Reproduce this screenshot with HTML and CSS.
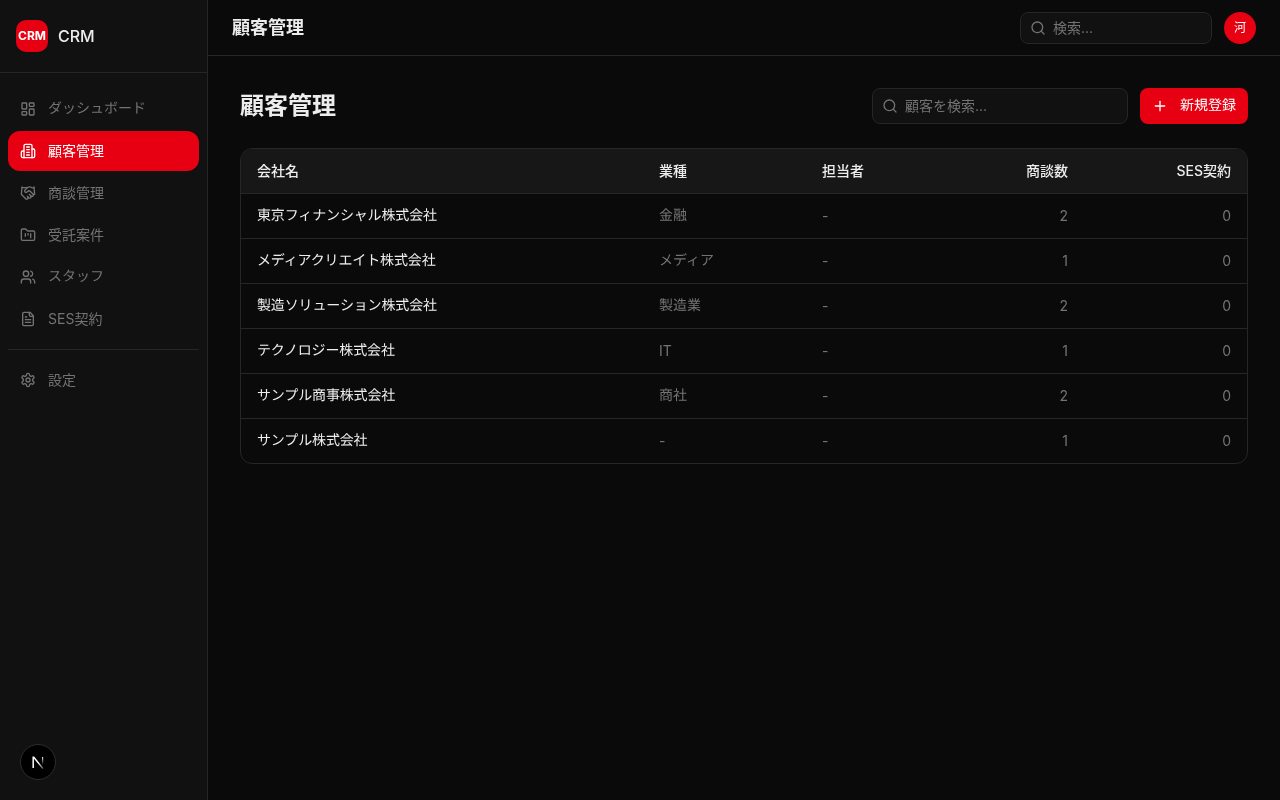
FILE: index.html
```html
<!DOCTYPE html>
<html lang="ja">
<head>
<meta charset="utf-8">
<title>顧客管理</title>
<link rel="stylesheet" href="styles.css">
</head>
<body>
<div class="app">
  <aside class="sidebar">
    <div class="brand">
      <div class="brand-logo">CRM</div>
      <span class="brand-name">CRM</span>
    </div>
    <nav class="nav">
      <a class="nav-item"><svg class="icon" viewBox="0 0 24 24"><rect x="3" y="3" width="7" height="9" rx="1"/><rect x="14" y="3" width="7" height="5" rx="1"/><rect x="14" y="12" width="7" height="9" rx="1"/><rect x="3" y="16" width="7" height="5" rx="1"/></svg><span class="geo">ダッシュボード</span></a>
      <a class="nav-item active"><svg class="icon" viewBox="0 0 24 24"><path d="M6 22V4a2 2 0 0 1 2-2h8a2 2 0 0 1 2 2v18Z"/><path d="M6 12H4a2 2 0 0 0-2 2v6a2 2 0 0 0 2 2h2"/><path d="M18 9h2a2 2 0 0 1 2 2v9a2 2 0 0 1-2 2h-2"/><path d="M10 6h4"/><path d="M10 10h4"/><path d="M10 14h4"/><path d="M10 18h4"/></svg><span>顧客管理</span></a>
      <a class="nav-item"><svg class="icon" viewBox="0 0 24 24"><path d="m11 17 2 2a1 1 0 1 0 3-3"/><path d="m14 14 2.5 2.5a1 1 0 1 0 3-3l-3.88-3.88a3 3 0 0 0-4.24 0l-.88.88a1 1 0 1 1-3-3l2.81-2.81a5.79 5.79 0 0 1 7.06-.87l.47.28a2 2 0 0 0 1.42.25L21 4"/><path d="m21 3 1 11h-2"/><path d="M3 3 2 14l6.5 6.5a1 1 0 1 0 3-3"/><path d="M3 4h8"/></svg><span>商談管理</span></a>
      <a class="nav-item"><svg class="icon" viewBox="0 0 24 24"><path d="M4 20h16a2 2 0 0 0 2-2V8a2 2 0 0 0-2-2h-7.93a2 2 0 0 1-1.66-.9l-.82-1.2A2 2 0 0 0 7.93 3H4a2 2 0 0 0-2 2v13c0 1.1.9 2 2 2Z"/><path d="M8 10v4"/><path d="M12 10v2"/><path d="M16 10v6"/></svg><span>受託案件</span></a>
      <a class="nav-item"><svg class="icon" viewBox="0 0 24 24"><path d="M16 21v-2a4 4 0 0 0-4-4H6a4 4 0 0 0-4 4v2"/><circle cx="9" cy="7" r="4"/><path d="M22 21v-2a4 4 0 0 0-3-3.87"/><path d="M16 3.13a4 4 0 0 1 0 7.75"/></svg><span class="geo">スタッフ</span></a>
      <a class="nav-item"><svg class="icon" viewBox="0 0 24 24"><path d="M15 2H6a2 2 0 0 0-2 2v16a2 2 0 0 0 2 2h12a2 2 0 0 0 2-2V7Z"/><path d="M14 2v4a2 2 0 0 0 2 2h4"/><path d="M10 9H8"/><path d="M16 13H8"/><path d="M16 17H8"/></svg><span>SES契約</span></a>
      <div class="nav-divider"></div>
      <a class="nav-item"><svg class="icon" viewBox="0 0 24 24"><path d="M12.22 2h-.44a2 2 0 0 0-2 2v.18a2 2 0 0 1-1 1.73l-.43.25a2 2 0 0 1-2 0l-.15-.08a2 2 0 0 0-2.73.73l-.22.38a2 2 0 0 0 .73 2.73l.15.1a2 2 0 0 1 1 1.72v.51a2 2 0 0 1-1 1.74l-.15.09a2 2 0 0 0-.73 2.73l.22.38a2 2 0 0 0 2.73.73l.15-.08a2 2 0 0 1 2 0l.43.25a2 2 0 0 1 1 1.73V20a2 2 0 0 0 2 2h.44a2 2 0 0 0 2-2v-.18a2 2 0 0 1 1-1.73l.43-.25a2 2 0 0 1 2 0l.15.08a2 2 0 0 0 2.73-.73l.22-.39a2 2 0 0 0-.73-2.73l-.15-.08a2 2 0 0 1-1-1.74v-.5a2 2 0 0 1 1-1.74l.15-.09a2 2 0 0 0 .73-2.73l-.22-.38a2 2 0 0 0-2.73-.73l-.15.08a2 2 0 0 1-2 0l-.43-.25a2 2 0 0 1-1-1.73V4a2 2 0 0 0-2-2z"/><circle cx="12" cy="12" r="3"/></svg><span>設定</span></a>
    </nav>
  </aside>
  <div class="main">
    <header class="topbar">
      <div class="topbar-title">顧客管理</div>
      <div class="topbar-right">
        <label class="search search-top"><svg class="icon search-icon" viewBox="0 0 24 24"><circle cx="11" cy="11" r="8"/><path d="m21 21-4.3-4.3"/></svg><input class="search-input" placeholder="検索..."></label>
        <div class="avatar">河</div>
      </div>
    </header>
    <main class="content">
      <div class="page-head">
        <h1 class="page-title">顧客管理</h1>
        <div class="page-actions">
          <label class="search search-page"><svg class="icon search-icon" viewBox="0 0 24 24"><circle cx="11" cy="11" r="8"/><path d="m21 21-4.3-4.3"/></svg><input class="search-input" placeholder="顧客を検索..."></label>
          <button class="btn-primary"><svg class="icon" viewBox="0 0 24 24"><path d="M5 12h14"/><path d="M12 5v14"/></svg><span class="geo">新規登録</span></button>
        </div>
      </div>
      <div class="table-wrap">
        <table class="table">
          <colgroup><col class="col-name"><col class="col-std"><col class="col-std"><col class="col-deals"><col class="col-std"></colgroup>
          <thead>
            <tr><th>会社名</th><th>業種</th><th>担当者</th><th class="num">商談数</th><th class="num">SES契約</th></tr>
          </thead>
          <tbody>
            <tr><td class="name geo">東京フィナンシャル株式会社</td><td class="geo">金融</td><td>-</td><td class="num">2</td><td class="num">0</td></tr>
            <tr><td class="name geo">メディアクリエイト株式会社</td><td class="geo">メディア</td><td>-</td><td class="num">1</td><td class="num">0</td></tr>
            <tr><td class="name geo">製造ソリューション株式会社</td><td class="geo">製造業</td><td>-</td><td class="num">2</td><td class="num">0</td></tr>
            <tr><td class="name geo">テクノロジー株式会社</td><td>IT</td><td>-</td><td class="num">1</td><td class="num">0</td></tr>
            <tr><td class="name geo">サンプル商事株式会社</td><td class="geo">商社</td><td>-</td><td class="num">2</td><td class="num">0</td></tr>
            <tr><td class="name geo">サンプル株式会社</td><td>-</td><td>-</td><td class="num">1</td><td class="num">0</td></tr>
          </tbody>
        </table>
      </div>
    </main>
  </div>
</div>
<div class="dev-badge"><svg class="dev-logo" viewBox="0 0 16 16"><defs><linearGradient id="dev-fade" x1="0" y1="0" x2="1" y2="1"><stop offset="0.5" stop-color="#fff"/><stop offset="1" stop-color="#fff" stop-opacity="0.3"/></linearGradient><linearGradient id="dev-fade-right" x1="0" y1="0" x2="0" y2="1"><stop offset="0" stop-color="#fff" stop-opacity="0.9"/><stop offset="1" stop-color="#fff" stop-opacity="0"/></linearGradient></defs><path class="dev-n" d="M3.2 14V3.2h.6L13 14.6"/><rect class="dev-n2" x="12" y="3" width="1.2" height="8"/></svg></div>
</body>
</html>
```
FILE: styles.css
```css
* { box-sizing: border-box; }
html, body { margin: 0; height: 100%; }
body {
  background: #0a0a0a;
  color: #ededed;
  font-family: Inter, "Noto Sans CJK JP", sans-serif;
  font-size: 14px;
  line-height: 20px;
  overflow: hidden;
}
.geo { text-rendering: geometricPrecision; }
.app { display: flex; height: 800px; will-change: transform; }
.icon {
  width: 16px; height: 16px; flex: none;
  fill: none; stroke: currentColor; stroke-width: 2;
  stroke-linecap: round; stroke-linejoin: round;
}
.sidebar {
  width: 208px; flex: none;
  background: #111111;
  border-right: 1px solid #262626;
  display: flex; flex-direction: column;
}
.brand {
  height: 73px; padding: 0 16px;
  display: flex; align-items: center; gap: 10px;
  border-bottom: 1px solid #262626;
}
.brand-logo {
  width: 32px; height: 32px; border-radius: 10px;
  background: #e60012; color: #fff;
  font-size: 12px; line-height: 16px; font-weight: 700;
  display: flex; align-items: center; justify-content: center;
}
.brand-name { font-size: 16px; line-height: 24px; font-weight: 500; color: #ededed; }
.nav { padding: 16px 8px; display: flex; flex-direction: column; gap: 2px; }
.nav-item {
  height: 40px; padding: 0 12px; border-radius: 12px;
  display: flex; align-items: center; gap: 12px;
  font-size: 14px; color: #737373;
}
.nav-item.active { background: #e60012; color: #fff; }
.nav-divider { height: 1px; background: #262626; margin: 8px 0; }
.main { flex: 1; min-width: 0; display: flex; flex-direction: column; }
.topbar {
  height: 56px; padding: 0 24px; flex: none;
  display: flex; align-items: center; justify-content: space-between;
  border-bottom: 1px solid #262626;
}
.topbar-title { font-size: 18px; line-height: 28px; font-weight: 600; color: #ededed; }
.topbar-right { display: flex; align-items: center; gap: 12px; }
.search {
  display: flex; align-items: center; gap: 7px;
  background: #111111; border: 1px solid #262626; border-radius: 8px;
  padding: 0 9px; color: #737373;
}
.search-top { width: 192px; height: 32px; }
.search-page { width: 256px; height: 36px; }
.search-input {
  flex: 1; min-width: 0; border: 0; outline: 0; padding: 0;
  background: transparent; color: #ededed;
  font: 14px/20px Inter, "Noto Sans CJK JP", sans-serif;
}
.search-input::placeholder { color: #737373; opacity: 1; }
.avatar {
  width: 32px; height: 32px; border-radius: 50%;
  background: #e60012; color: #fff; font-size: 12px; line-height: 16px;
  display: flex; align-items: center; justify-content: center;
}
.content { padding: 32px; flex: 1; }
.page-head { display: flex; align-items: center; justify-content: space-between; margin-bottom: 24px; }
.page-title { margin: 0; font-size: 24px; line-height: 32px; font-weight: 700; color: #ededed; }
.page-actions { display: flex; align-items: center; gap: 12px; }
.btn-primary {
  width: 108px; height: 36px; border: 0; border-radius: 8px; padding: 0 12px;
  background: #e60012; color: #fff;
  display: flex; align-items: center; gap: 12px;
  font: 14px/20px Inter, "Noto Sans CJK JP", sans-serif;
}
.table-wrap { border: 1px solid #262626; border-radius: 12px; overflow: hidden; }
.table { width: 100%; border-collapse: separate; border-spacing: 0; table-layout: fixed; }
.col-name { width: 402px; }
.col-std { width: 163px; }
.col-deals { width: 115px; }
.table th {
  height: 45px; padding: 0 16px; text-align: left;
  background: #171717; border-bottom: 1px solid #262626;
  font-size: 14px; font-weight: 500; color: #ededed;
}
.table td {
  height: 45px; padding: 0 16px;
  border-bottom: 1px solid #262626;
  font-size: 14px; color: #737373;
}
.table tbody tr:last-child td { border-bottom: 0; height: 44px; }
.table td.name { color: #ededed; letter-spacing: -0.01em; }
.table .num { text-align: right; }
.dev-badge {
  position: absolute; left: 20px; top: 744px;
  width: 36px; height: 36px; border-radius: 50%;
  background: #000; border: 1px solid #2e2e2e;
  display: flex; align-items: center; justify-content: center;
}
.dev-logo { width: 16px; height: 16px; fill: none; }
.dev-n { stroke: url(#dev-fade); stroke-width: 1.5; }
.dev-n2 { fill: url(#dev-fade-right); }
```
